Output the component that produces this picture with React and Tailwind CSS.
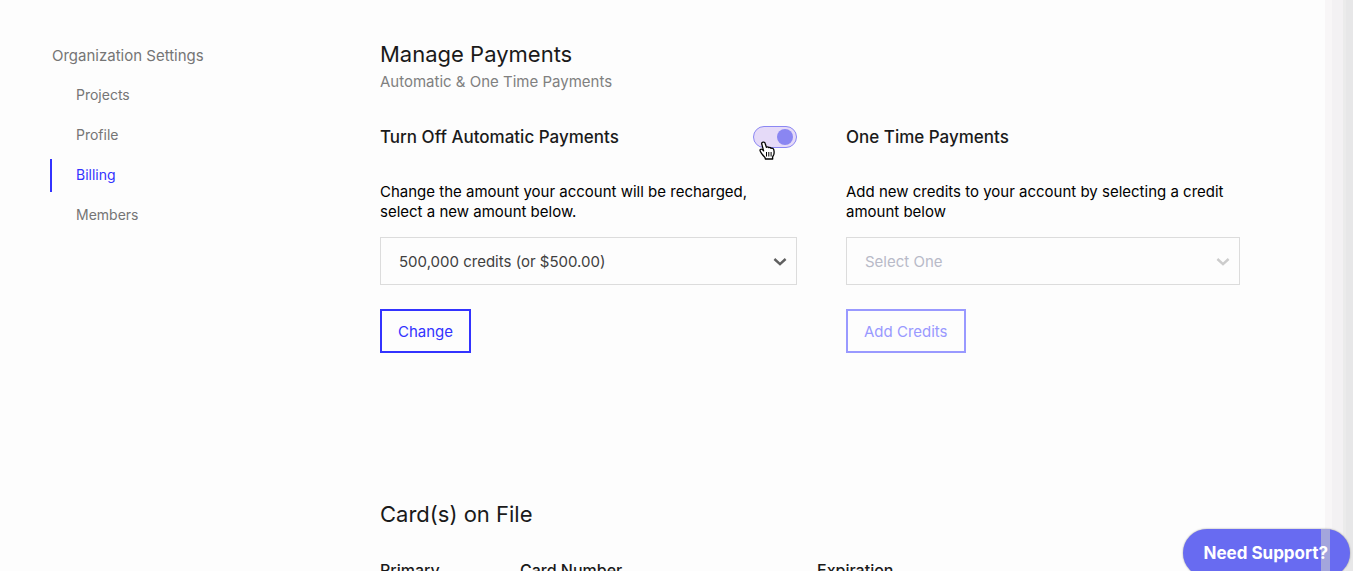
import { useState } from "react";

const navItems = ["Projects", "Profile", "Billing", "Members"];

function Chevron({ className }) {
  return (
    <svg
      viewBox="0 0 14 10"
      className={"pointer-events-none absolute right-[10px] top-[20px] h-[10px] w-[14px] " + className}
      fill="none"
      stroke="currentColor"
      strokeWidth="2.4"
      aria-hidden="true"
    >
      <path d="M1.4 2 7 7.2 12.6 2" />
    </svg>
  );
}

function Sidebar() {
  return (
    <nav aria-label="Organization Settings" className="w-[330px] shrink-0 pt-[44px]">
      <h2 className="pl-[2px] text-[15px] leading-[24px] text-[#757575]">Organization Settings</h2>
      <ul className="mt-[11px] flex flex-col gap-[7px]">
        {navItems.map((item) => (
          <li key={item}>
            <a
              href="#"
              aria-current={item === "Billing" ? "page" : undefined}
              className={
                "block border-l-2 pb-[2px] pl-6 text-[14px] leading-[31px] " +
                (item === "Billing" ? "border-[#3333ff] text-[#3333ff]" : "border-transparent text-[#757575]")
              }
            >
              {item}
            </a>
          </li>
        ))}
      </ul>
    </nav>
  );
}

function Cursor() {
  return (
    <svg
      viewBox="0 0 17 19"
      className="pointer-events-none absolute left-[6px] top-[15px] h-[19px] w-[17px]"
      aria-hidden="true"
    >
      <path
        d="M3.900 1.200c1-.4 1.900.1 2.200 1.100l1.300 4c.9-.6 1.900-.4 2.400.3.9-.4 1.800-.1 2.300.7 1.300-.3 2.300.2 2.700 1.500.4 1.700.5 3.300-.1 4.900l-1.100 2.400.1 1.900H6.300l-.3-1.600c-1.600-1.300-2.700-3-4.100-5-.9-1.300-1.300-2.300-.5-2.900.9-.7 2-.1 3.200 1.400L2.800 3.200c-.3-.9.200-1.700 1.100-2z"
        fill="#fff"
        stroke="#000"
        strokeWidth="1.3"
        strokeLinejoin="round"
      />
      <path d="M7.500 11v4.500M9.800 11v4.500M12.100 11v4.500" stroke="#000" strokeWidth="1" />
    </svg>
  );
}

function Toggle() {
  const [on, setOn] = useState(true);
  return (
    <label className="relative block h-[22px] w-[44px]">
      <input
        type="checkbox"
        role="switch"
        aria-label="Turn off automatic payments"
        checked={on}
        onChange={(e) => setOn(e.target.checked)}
        className="peer block h-[22px] w-[44px] appearance-none rounded-full border border-[#8b87f3] bg-[#e5daf8]"
      />
      <span className="pointer-events-none absolute left-[3px] top-[3px] size-4 rounded-full bg-[#8a86f2] peer-checked:left-6" />
      <Cursor />
    </label>
  );
}

export default function App() {
  return (
    <div className="relative flex h-screen overflow-hidden bg-[#fdfdfd] pl-[50px] font-['Inter',sans-serif] text-[#1a1a1a]">
      <Sidebar />

      <main className="min-w-0 flex-1 pr-[85px] pt-[38px]">
        <h1 className="text-[22px] leading-[32px]">Manage Payments</h1>
        <p className="text-[15px] leading-[24px] text-[#808080]">Automatic &amp; One Time Payments</p>

        <div className="mt-[30px] grid grid-cols-[417fr_394fr] gap-[49px]">
          <section>
            <div className="flex items-center justify-between">
              <h2 className="text-[17px] font-medium leading-[26px]">Turn Off Automatic Payments</h2>
              <Toggle />
            </div>
            <p className="mt-[32px] pr-8 text-[15px] leading-[20px] text-black">
              <label htmlFor="recharge">
                Change the amount your account will be recharged, select a new amount below.
              </label>
            </p>
            <div className="relative mt-[15px]">
              <select
                id="recharge"
                className="block h-[48px] w-full appearance-none border border-[#dcdcdc] bg-transparent pl-[18px] pt-[2px] text-[15px] text-[#404040]"
              >
                <option>500,000 credits (or $500.00)</option>
              </select>
              <Chevron className="text-[#606060]" />
            </div>
            <button
              type="button"
              className="mt-6 h-[44px] border-2 border-[#3333ff] px-4 pt-[2px] text-[15px] text-[#3333ff]"
            >
              Change
            </button>
          </section>

          <section>
            <h2 className="text-[17px] font-medium leading-[26px]">One Time Payments</h2>
            <p className="mt-[32px] text-[15px] leading-[20px] text-black">
              <label htmlFor="onetime">
                Add new credits to your account by selecting a credit amount below
              </label>
            </p>
            <div className="relative mt-[15px]">
              <select
                id="onetime"
                className="block h-[48px] w-full appearance-none border border-[#dcdcdc] bg-transparent pl-[18px] pt-[2px] text-[15px] text-[#b8bac8]"
              >
                <option>Select One</option>
              </select>
              <Chevron className="text-[#cccccc]" />
            </div>
            <button
              type="button"
              disabled
              className="mt-6 h-[44px] border-2 border-[#9999ff] px-4 pt-[2px] text-[15px] text-[#9999ff]"
            >
              Add Credits
            </button>
          </section>
        </div>

        <h1 className="mt-[145px] text-[22px] leading-[32px]">Card(s) on File</h1>
        <table className="mt-[28px] w-full table-fixed text-left text-[16px] leading-[24px]">
          <thead>
            <tr>
              <th className="w-[140px] font-medium">Primary</th>
              <th className="w-[297px] font-medium">Card Number</th>
              <th className="font-medium">Expiration</th>
            </tr>
          </thead>
        </table>
      </main>

      <div className="flex w-[28px] shrink-0" aria-hidden="true">
        <div className="w-[7px] bg-[#f8f6f7]" />
        <div className="w-[11px] bg-[#f3f1f3]" />
        <div className="w-[3px] bg-[#ebebeb]" />
        <div className="flex-1 bg-[#e7e7e8]" />
      </div>

      <button
        type="button"
        className="absolute -bottom-[6px] right-[3px] h-[48px] rounded-full bg-[#686bf1] pl-5 pr-[22px] pt-[2px] text-[17px] font-bold text-white shadow-[0_0_2px_rgba(0,0,0,0.4)]"
      >
        <span className="absolute right-[20px] top-0 h-full w-[9px] bg-[#a3a5dc]" aria-hidden="true" />
        <span className="relative">Need Support?</span>
      </button>
    </div>
  );
}
